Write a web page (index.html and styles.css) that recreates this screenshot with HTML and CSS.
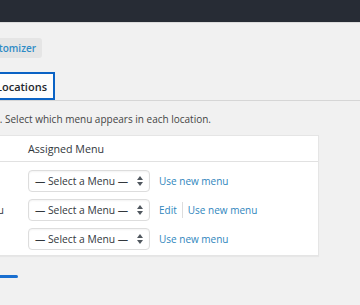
FILE: index.html
```html
<!DOCTYPE html>
<html lang="en">

<head>
  <meta charset="UTF-8" />
  <title>Menus ‹ Manage Locations</title>
  <link rel="stylesheet" href="styles.css">
</head>

<body>
  <div class="adminbar"></div>

  <div class="wrap">
    <div class="title-row">
      <a class="btn" href="#"><span>Manage with Customizer</span></a>
    </div>

    <div class="tabs">
      <a class="tab active" href="#"><span>Manage Locations</span></a>
    </div>

    <p class="desc"><span>Your theme supports 3 menus. Select which menu appears in each location.</span></p>

    <div class="locations">
      <div class="row head">
        <div class="cell label">Theme Location</div>
        <div class="cell">Assigned Menu</div>
      </div>
      <div class="row">
        <div class="cell label">Primary</div>
        <div class="cell">
          <div class="select"><span>— Select a Menu —</span>
            <svg width="6" height="10" viewBox="0 0 6 10"><path d="M3 0 6 4H0zM3 10 0 6h6z" fill="#50575e"/></svg>
          </div>
          <a href="#" class="link">Use new menu</a>
        </div>
      </div>
      <div class="row">
        <div class="cell label">Footer Social Links Menu</div>
        <div class="cell">
          <div class="select"><span>— Select a Menu —</span>
            <svg width="6" height="10" viewBox="0 0 6 10"><path d="M3 0 6 4H0zM3 10 0 6h6z" fill="#50575e"/></svg>
          </div>
          <a href="#" class="link">Edit</a>
          <span class="sep"></span>
          <a href="#" class="link">Use new menu</a>
        </div>
      </div>
      <div class="row">
        <div class="cell label">Footer</div>
        <div class="cell">
          <div class="select"><span>— Select a Menu —</span>
            <svg width="6" height="10" viewBox="0 0 6 10"><path d="M3 0 6 4H0zM3 10 0 6h6z" fill="#50575e"/></svg>
          </div>
          <a href="#" class="link">Use new menu</a>
        </div>
      </div>
    </div>

    <div class="save-bar"></div>
  </div>
</body>

</html>
```

FILE: styles.css
```css
body {
  margin: 0;
  background: #f1f1f1;
  font-family: "Open Sans", "Liberation Sans", sans-serif;
  color: #32373c;
  overflow: hidden;
}

.adminbar {
  height: 22px;
  background: #272c35;
  border-bottom: 1px solid #dcdcdc;
}

.wrap {
  padding-top: 15px;
}

/* clipped boxes show only the end of their text */
.btn,
.tab,
.desc {
  display: flex;
  justify-content: flex-end;
  overflow: hidden;
  white-space: nowrap;
}

.btn {
  width: 42px;
  height: 20px;
  padding-right: 6px;
  box-sizing: border-box;
  align-items: center;
  background: #e5e5e5;
  border-radius: 0 3px 3px 0;
  color: #2e8bc6;
  font-size: 10px;
  font-weight: 600;
  text-decoration: none;
}

.tabs {
  margin-top: 14px;
  border-bottom: 1px solid #d6d6d6;
  height: 28px;
}

.tab {
  width: 55px;
  height: 28px;
  box-sizing: border-box;
  padding-right: 6px;
  align-items: center;
  background: #fdfdfd;
  border: 2px solid #0b63c5;
  border-left: none;
  color: #23282d;
  font-size: 11px;
  font-weight: 600;
  text-decoration: none;
}

.desc {
  width: 211px;
  margin: 11px 0 9px;
  font-size: 10px;
  color: #444;
}

.locations {
  margin-left: -123px;
  width: 440px;
  background: #fff;
  border: 1px solid #e5e5e5;
  box-shadow: 0 1px 1px rgba(0, 0, 0, 0.04);
  padding-bottom: 2px;
}

.row {
  display: grid;
  grid-template-columns: 150px 1fr;
  align-items: center;
  height: 29px;
  font-size: 10px;
}

.row.head {
  height: 25px;
  border-bottom: 1px solid #e1e1e1;
  margin-bottom: 4px;
  font-size: 10.7px;
  color: #32373c;
}

.cell {
  display: flex;
  align-items: center;
  white-space: nowrap;
}

.label {
  padding-left: 10px;
}

.select {
  width: 122px;
  height: 22px;
  box-sizing: border-box;
  display: flex;
  align-items: center;
  justify-content: space-between;
  padding: 0 6px;
  border: 1px solid #ddd;
  border-radius: 4px;
  box-shadow: inset 0 1px 2px rgba(0, 0, 0, 0.05);
  font-size: 10.3px;
  color: #32373c;
}

.link {
  margin-left: 9px;
  color: #2f86bd;
  text-decoration: none;
}

.sep {
  width: 1px;
  height: 16px;
  background: #ddd;
  margin-left: 5px;
}

.sep + .link {
  margin-left: 5px;
}

.save-bar {
  margin-top: 19px;
  width: 18px;
  height: 3px;
  background: #1a6fd0;
  border-radius: 0 2px 2px 0;
}
```
